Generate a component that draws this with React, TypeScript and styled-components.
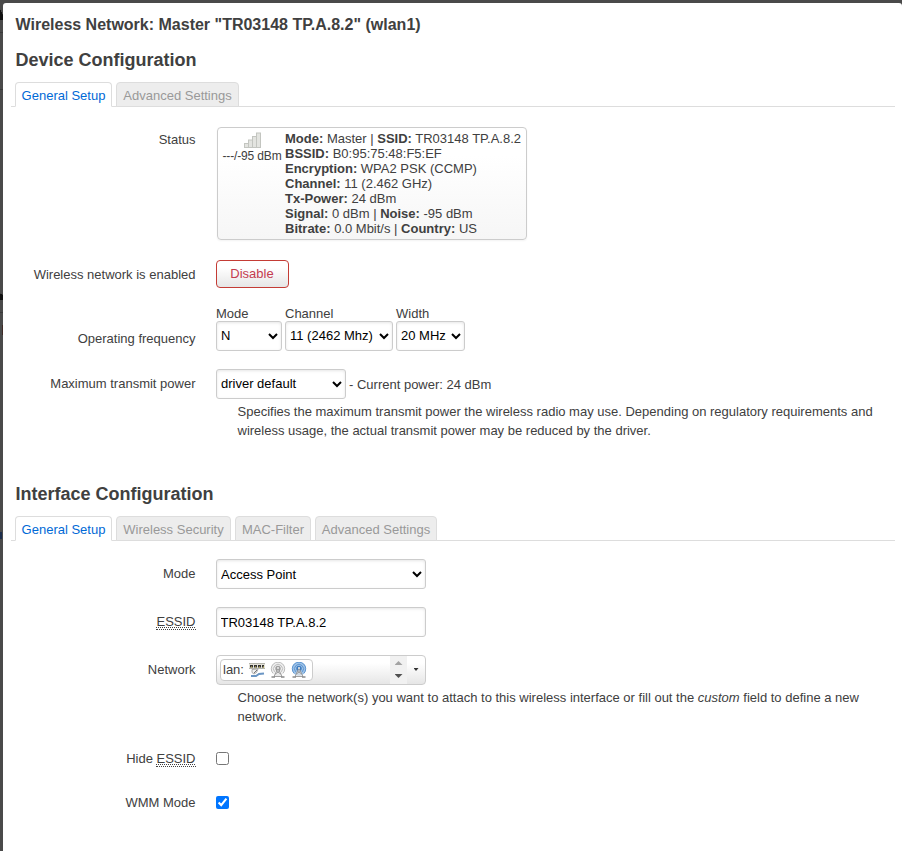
import React from "react";
import styled, { createGlobalStyle, css } from "styled-components";

const GlobalStyle = createGlobalStyle`
  * { box-sizing: border-box; }
  html, body { margin: 0; padding: 0; background: #4a4a4a; overflow: hidden; }
  body, select, input, button {
    font-family: "Liberation Sans", Arial, sans-serif;
    font-size: 13px;
  }
  body { color: #404040; line-height: 18px; }
`;

const Backdrop = styled.div`
  height: 851px;
  padding: 3px 0 0 3px;
  background:
    linear-gradient(65deg, #111 55%, transparent 60%) 0 7px / 3px 13px no-repeat,
    linear-gradient(#3a3a3a, #3a3a3a) 0 32px / 3px 1px no-repeat,
    linear-gradient(#3a3a3a, #3a3a3a) 0 89px / 3px 1px no-repeat,
    linear-gradient(25deg, #111 55%, transparent 60%) 0 290px / 3px 10px no-repeat,
    linear-gradient(#3a3a3a, #3a3a3a) 0 312px / 3px 1px no-repeat,
    linear-gradient(#3d2a25, #3d2a25) 2px 325px / 1px 10px no-repeat,
    linear-gradient(#1d2f4d, #1d2f4d) 0 532px / 2px 7px no-repeat,
    #4a4a4a;
  overflow: hidden;
`;

const Modal = styled.div`
  height: 860px;
  padding: 13px 7px 0 8px;
  background: #fff;
  border-radius: 3px 3px 0 0;
`;

const Title = styled.h4`
  margin: 0 0 0 4.5px;
  font-size: 16px;
  line-height: 18px;
  height: 26px;
  white-space: nowrap;
`;

const SectionTitle = styled.h3`
  margin: 0 0 0 4.5px;
  font-size: 18px;
  line-height: 36px;
  height: 40px;
`;

const Section = styled.section<{ $height: number }>`
  height: ${(p) => p.$height}px;
`;

const Tabs = styled.ul<{ $gap: number }>`
  display: flex;
  gap: 4px;
  margin: 0 0 ${(p) => p.$gap}px;
  padding: 0 0 0 4px;
  height: 25px;
  border-bottom: 1px solid #ddd;
  list-style: none;
`;

const Tab = styled.li<{ $active?: boolean; $width: number }>`
  display: flex;
  justify-content: center;
  width: ${(p) => p.$width}px;
  height: 25px;
  border: 1px solid #ddd;
  border-radius: 4px 4px 0 0;
  line-height: 25px;
  white-space: nowrap;
  color: ${(p) => (p.$active ? "#0069d6" : "#999")};
  background: ${(p) => (p.$active ? "#fff" : "#ededed")};
  border-bottom-color: ${(p) => (p.$active ? "#fff" : "#ddd")};
`;

const Row = styled.div<{ $height: number }>`
  display: flex;
  gap: 20.5px;
  height: ${(p) => p.$height}px;
`;

const Label = styled.label<{ $top: number }>`
  flex: 0 0 184.5px;
  padding-top: ${(p) => p.$top}px;
  text-align: right;
`;

const Field = styled.div`
  flex: 1;
  min-width: 0;
`;

const Inline = styled.div`
  display: flex;
  align-items: center;
  gap: 3px;
  span { padding-top: 2px; }
`;

const Abbr = styled.span`
  text-decoration: underline dotted;
  text-decoration-thickness: 1px;
  border-bottom: 1px dotted #404040;
  display: inline-block;
  line-height: 14px;
`;

const StatusBox = styled.div`
  display: flex;
  width: 310px;
  height: 113px;
  margin-left: 1px;
  padding: 3px 0 0 4.5px;
  border: 1px solid #ccc;
  border-radius: 4px;
  background: linear-gradient(#fff, #fff 25%, #f6f6f6);
  box-shadow: 0 1px 2px rgba(0, 0, 0, 0.05);
  line-height: 15px;
  white-space: nowrap;
`;

const Signal = styled.div`
  flex: 0 0 62.5px;
  font-size: 12px;
  letter-spacing: -0.15px;
  svg { display: block; margin: 1px 0 1px 21px; }
`;

const control = css`
  height: 30px;
  border: 1px solid #ccc;
  border-radius: 3px;
  background: #fff;
  color: #000;
  box-shadow: inset 0 1px 3px rgba(0, 0, 0, 0.1);
`;

const Select = styled.select<{ $width: number; $lift?: number }>`
  ${control}
  display: block;
  width: ${(p) => p.$width}px;
  padding: 0 1px ${(p) => p.$lift ?? 0}px 0;
`;

const TextInput = styled.input`
  ${control}
  display: block;
  width: 210px;
  padding: 0 3.5px;
`;

const DisableButton = styled.button`
  width: 73px;
  height: 28px;
  padding: 0 1px 2px 0;
  border: 1px solid #c43c35;
  border-radius: 4px;
  background: linear-gradient(#fff, #fff 25%, #e6e6e6);
  color: #c43c50;
`;

const Frequency = styled.div`
  display: flex;
  gap: 3px;
`;

const FrequencyItem = styled.div`
  padding-top: 1px;
  line-height: 15px;
`;

const Description = styled.p`
  margin: 0;
  padding: 3px 0 0 21.5px;
  line-height: 19px;
  white-space: nowrap;
`;

const Dropdown = styled.div`
  display: flex;
  width: 210px;
  height: 30px;
  padding-left: 3px;
  border: 1px solid #ccc;
  border-radius: 4px;
  background: linear-gradient(#fff, #fff 25%, #e6e6e6);
`;

const Chip = styled.div`
  display: flex;
  align-items: center;
  width: 93px;
  height: 22px;
  margin: 3px auto 0 0;
  padding-left: 2px;
  border: 1px solid #ccc;
  border-radius: 4px;
  background: #fff;
  svg { flex: none; margin-left: 5px; }
`;

const Spinner = styled.div`
  display: flex;
  flex-direction: column;
  align-items: center;
  gap: 9px;
  width: 17px;
  height: 28px;
  padding-top: 5px;
  background: #f1f1f1;
`;

const Triangle = styled.i<{ $up?: boolean }>`
  width: 8px;
  height: 4px;
  background: ${(p) => (p.$up ? "#a3a3a3" : "#505050")};
  clip-path: ${(p) =>
    p.$up ? "polygon(50% 0, 100% 100%, 0 100%)" : "polygon(0 0, 100% 0, 50% 100%)"};
`;

const Opener = styled.div`
  display: flex;
  justify-content: center;
  width: 18px;
  padding-top: 12px;
  i { width: 5px; height: 3px; background: #333; }
`;

const Checkbox = styled.input`
  display: block;
  width: 13px;
  height: 13px;
  margin: 2px 0 0;
`;

const SignalIcon = () => (
  <svg width="17" height="16" viewBox="0 0 17 16">
    {[0, 1, 2, 3].map((i) => (
      <rect
        key={i}
        x={0.5 + i * 4}
        y={11.5 - i * 3.5}
        width="4"
        height={4 + i * 3.5}
        fill="#e3e4e0"
        stroke="#c3c5c0"
      />
    ))}
  </svg>
);

const SwitchIcon = () => (
  <svg width="16" height="16" viewBox="0 0 16 16">
    <path d="M0 1h16v5H0z" fill="#e4e2d8" />
    <path d="M0 1.5h16M0 6.5h16" stroke="#b5b5ad" />
    <path d="M1 3h3v2.5H1zM5 3h3v2.5H5zM9 3h3v2.5H9zM13 3h2v2.5h-2z" fill="#333" />
    <path d="M2 5h1M6 5h1M10 5h1M14 5h1" stroke="#d8c84e" />
    <path d="M3 7.5l6-.5-1.5 3.5L5 12 3 10.5z" fill="#f0f0f0" stroke="#999" strokeWidth=".8" />
    <path d="M2 14h5l3-2 5-.5" fill="none" stroke="#6b96c4" strokeWidth="2" />
    <path d="M5 11l3-3" stroke="#777" />
  </svg>
);

const AntennaIcon = ({ active }: { active?: boolean }) => {
  const wave = active ? "#5d95d0" : "#bcbcbc";
  return (
    <svg width="16" height="16" viewBox="0 0 16 16">
      <circle cx="8" cy="6.8" r="7" fill={active ? "#9fc3e8" : "#f0f0f0"} />
      <path
        d="M3 11.3A6.7 6.7 0 1 1 13 11.3M4.6 9.8A4.5 4.5 0 1 1 11.4 9.8"
        fill="none"
        stroke={wave}
        strokeWidth="1"
      />
      <circle cx="8" cy="6.5" r="2.7" fill={active ? "#3e7cc0" : "#a0a0a0"} />
      <path d="M8 6l-4 8.5h8z" fill="#e4e4e4" fillOpacity=".7" stroke="#8d8d8d" strokeWidth=".8" />
      <path d="M5.5 12l4-3M10.5 12l-4-3" stroke="#8d8d8d" strokeWidth=".7" />
      <circle cx="8" cy="6" r="1" fill="#eee" />
      <path d="M1.5 15h3.5M11 15h3.5" stroke="#8b8b8b" strokeWidth="1.4" />
    </svg>
  );
};

type TabItem = { name: string; width: number };

const deviceTabs: TabItem[] = [
  { name: "General Setup", width: 97 },
  { name: "Advanced Settings", width: 123 },
];

const interfaceTabs: TabItem[] = [
  { name: "General Setup", width: 97 },
  { name: "Wireless Security", width: 115 },
  { name: "MAC-Filter", width: 76 },
  { name: "Advanced Settings", width: 122 },
];

const TabBar = ({ items, gap }: { items: TabItem[]; gap: number }) => (
  <Tabs $gap={gap}>
    {items.map((item, i) => (
      <Tab key={item.name} $width={item.width} $active={i === 0}>{item.name}</Tab>
    ))}
  </Tabs>
);

export default function App() {
  return (
    <Backdrop>
      <GlobalStyle />
      <Modal>
        <Title>Wireless Network: Master "TR03148 TP.A.8.2" (wlan1)</Title>

        <Section $height={434}>
          <SectionTitle>Device Configuration</SectionTitle>
          <TabBar items={deviceTabs} gap={20} />
          <Row $height={133}>
            <Label $top={4}>Status</Label>
            <Field>
              <StatusBox>
                <Signal><SignalIcon />---/-95 dBm</Signal>
                <div>
                  <b>Mode:</b> Master | <b>SSID:</b> TR03148 TP.A.8.2<br />
                  <b>BSSID:</b> B0:95:75:48:F5:EF<br />
                  <b>Encryption:</b> WPA2 PSK (CCMP)<br />
                  <b>Channel:</b> 11 (2.462 GHz)<br />
                  <b>Tx-Power:</b> 24 dBm<br />
                  <b>Signal:</b> 0 dBm | <b>Noise:</b> -95 dBm<br />
                  <b>Bitrate:</b> 0.0 Mbit/s | <b>Country:</b> US
                </div>
              </StatusBox>
            </Field>
          </Row>
          <Row $height={45}>
            <Label $top={6}>Wireless network is enabled</Label>
            <Field><DisableButton>Disable</DisableButton></Field>
          </Row>
          <Row $height={64}>
            <Label $top={25}>Operating frequency</Label>
            <Field>
              <Frequency>
                <FrequencyItem>Mode<Select $width={66} $lift={2}><option>N</option></Select></FrequencyItem>
                <FrequencyItem>Channel<Select $width={108} $lift={2}><option>11 (2462 Mhz)</option></Select></FrequencyItem>
                <FrequencyItem>Width<Select $width={69} $lift={2}><option>20 MHz</option></Select></FrequencyItem>
              </Frequency>
            </Field>
          </Row>
          <Row $height={80}>
            <Label $top={6}>Maximum transmit power</Label>
            <Field>
              <Inline>
                <Select $width={130} $lift={2}><option>driver default</option></Select>
                <span>- Current power: 24 dBm</span>
              </Inline>
              <Description>
                Specifies the maximum transmit power the wireless radio may use. Depending on regulatory requirements and<br />
                wireless usage, the actual transmit power may be reduced by the driver.
              </Description>
            </Field>
          </Row>
        </Section>

        <Section $height={380}>
          <SectionTitle>Interface Configuration</SectionTitle>
          <TabBar items={interfaceTabs} gap={18} />
          <Row $height={48}>
            <Label $top={6}>Mode</Label>
            <Field><Select $width={210}><option>Access Point</option></Select></Field>
          </Row>
          <Row $height={48}>
            <Label $top={6}><Abbr>ESSID</Abbr></Label>
            <Field><TextInput defaultValue="TR03148 TP.A.8.2" /></Field>
          </Row>
          <Row $height={95}>
            <Label $top={6}>Network</Label>
            <Field>
              <Dropdown>
                <Chip>lan: <SwitchIcon /><AntennaIcon /><AntennaIcon active /></Chip>
                <Spinner><Triangle $up /><Triangle /></Spinner>
                <Opener><Triangle /></Opener>
              </Dropdown>
              <Description>
                Choose the network(s) you want to attach to this wireless interface or fill out the <em>custom</em> field to define a new<br />
                network.
              </Description>
            </Field>
          </Row>
          <Row $height={44}>
            <Label $top={0}>Hide <Abbr>ESSID</Abbr></Label>
            <Field><Checkbox type="checkbox" /></Field>
          </Row>
          <Row $height={44}>
            <Label $top={0}>WMM Mode</Label>
            <Field><Checkbox type="checkbox" defaultChecked /></Field>
          </Row>
        </Section>
      </Modal>
    </Backdrop>
  );
}
